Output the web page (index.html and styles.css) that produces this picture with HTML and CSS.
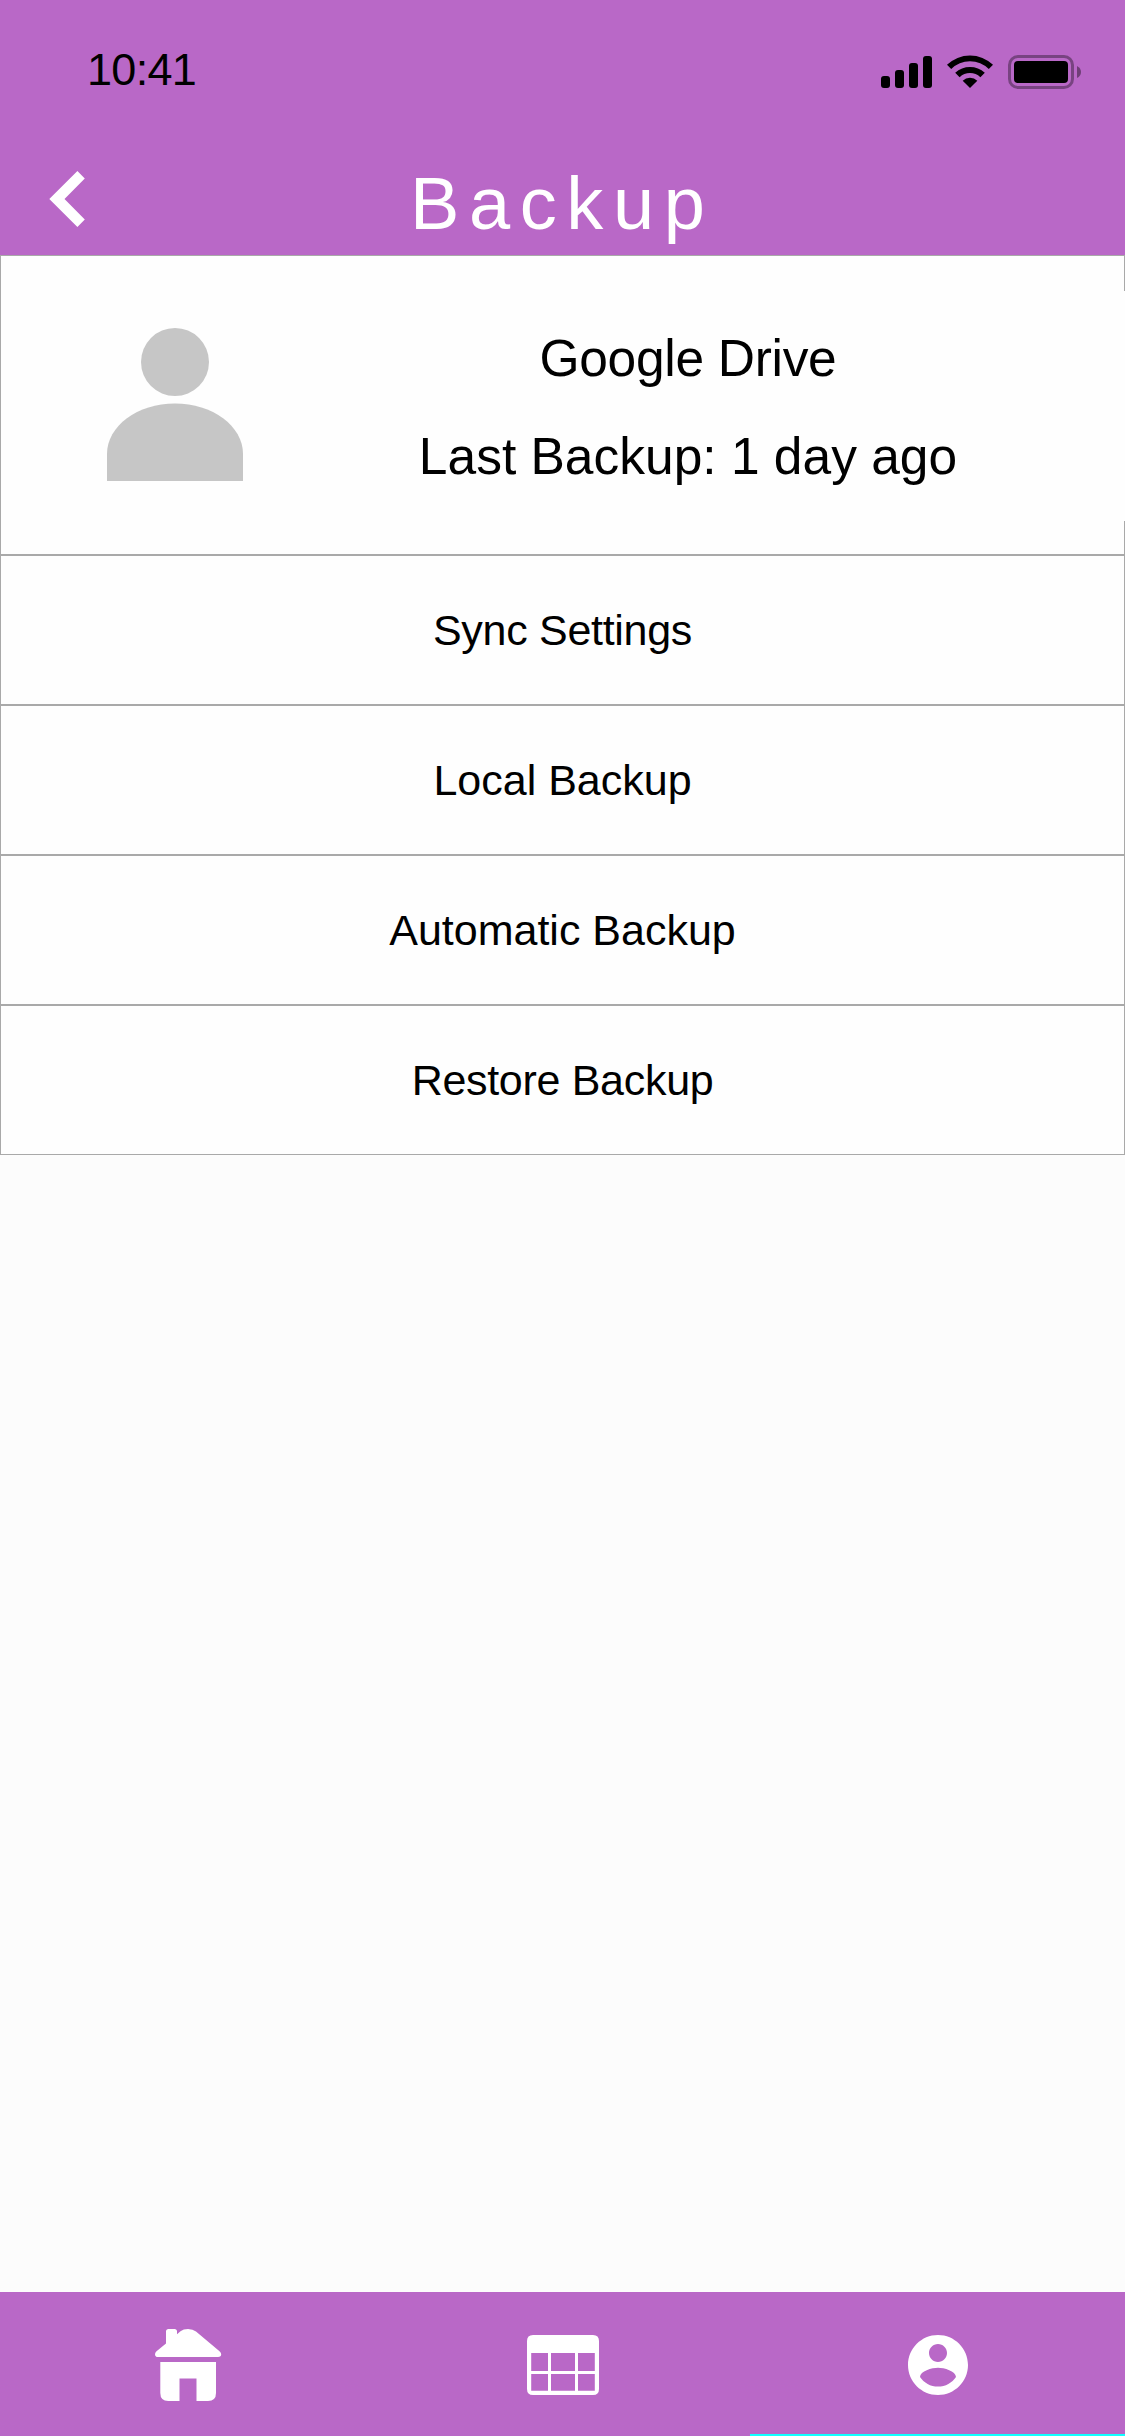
FILE: index.html
```html
<!DOCTYPE html>
<html lang="en">
<head>
<meta charset="utf-8">
<title>Backup</title>
<link rel="stylesheet" href="styles.css">
</head>
<body>
<div class="screen">
  <header class="header">
    <div class="status">
      <span class="time">10:41</span>
      <svg class="indicators" width="200" height="35" viewBox="881 55 200 35" aria-hidden="true">
        <rect x="881" y="76" width="9" height="12" rx="3"/>
        <rect x="895" y="70" width="9" height="18" rx="3"/>
        <rect x="909" y="63" width="9" height="25" rx="3"/>
        <rect x="923" y="56" width="9" height="32" rx="3"/>
        <g transform="translate(970 88)">
          <path d="M0 0L-7.3 -7.3A10.5 10.5 0 0 1 7.3 -7.3Z"/>
          <path d="M-14.8 -15.2A22 22 0 0 1 14.8 -15.2L10.4 -10.8A15.2 15.2 0 0 0 -10.4 -10.8Z"/>
          <path d="M-23 -23.2A33 33 0 0 1 23 -23.2L18.8 -19A26.5 26.5 0 0 0 -18.8 -19Z"/>
        </g>
        <rect x="1009.5" y="56.5" width="63" height="31" rx="8.5" fill="none" stroke="#000" stroke-opacity=".35" stroke-width="3"/>
        <rect x="1014" y="61" width="54" height="22" rx="4"/>
        <path d="M1077 66Q1081 68 1081 72T1077 78Z" fill-opacity=".4"/>
      </svg>
    </div>
    <div class="titlebar">
      <svg class="back" width="36" height="58" viewBox="49 170 36 58" aria-hidden="true"><path d="M49.3 199L77.4 171L84.8 178.5L64.5 199L84.8 219.5L77.4 227Z"/></svg>
      <h1 class="title">Backup</h1>
    </div>
  </header>

  <main class="list">
    <section class="row account">
      <svg class="avatar" width="136" height="153" viewBox="107.5 328 136 153" aria-hidden="true">
        <circle cx="175.5" cy="362" r="34"/>
        <path d="M107.5 481V454C107.5 426 138 403.5 175.5 403.5S243.5 426 243.5 454V481Z"/>
      </svg>
      <div class="info">
        <p class="line provider">Google Drive</p>
        <p class="line">Last Backup: 1 day ago</p>
      </div>
    </section>
    <div class="row item tight">Sync Settings</div>
    <div class="row item">Local Backup</div>
    <div class="row item">Automatic Backup</div>
    <div class="row item tight">Restore Backup</div>
  </main>

  <nav class="tabs">
    <div class="tab">
      <svg width="68" height="74" viewBox="154 2328 68 74" aria-hidden="true">
        <path d="M158 2357Q155 2357 155 2354.2Q155 2352.6 156.5 2351.2L166 2343.5V2331.5Q166 2329 168.5 2329H174.5Q177 2329 177 2331.5V2334.3L180.5 2331.3Q183.3 2329 188 2329Q193 2329 196 2331.5L219.5 2351.2Q221.2 2352.8 221.2 2354.3Q221.2 2357 218 2357Z"/>
        <path d="M160.3 2362H216V2393Q216 2401 208 2401H196.500V2378.500H179.500V2401H168.300Q160.300 2401 160.300 2393Z"/>
      </svg>
    </div>
    <div class="tab">
      <svg width="72" height="60" viewBox="527 2335 72 60" aria-hidden="true">
        <path fill-rule="evenodd" d="M533 2335H593Q599 2335 599 2341V2389Q599 2395 593 2395H533Q527 2395 527 2389V2341Q527 2335 533 2335ZM531.2 2353V2371H548V2353ZM551 2353V2371H575V2353ZM578 2353V2371H594.8V2353ZM531.2 2374V2390.7H548V2374ZM551 2374V2390.7H575V2374ZM578 2374V2390.7H594.8V2374Z"/>
      </svg>
    </div>
    <div class="tab active">
      <svg width="60" height="60" viewBox="2 2 20 20" aria-hidden="true">
        <path d="M12 2C6.48 2 2 6.48 2 12s4.48 10 10 10 10-4.48 10-10S17.52 2 12 2zm0 3c1.66 0 3 1.34 3 3s-1.34 3-3 3-3-1.34-3-3 1.34-3 3-3zm0 14.2c-2.5 0-4.71-1.28-6-3.22.03-1.99 4-3.08 6-3.08 1.99 0 5.97 1.09 6 3.08-1.29 1.94-3.5 3.22-6 3.22z"/>
      </svg>
    </div>
  </nav>
</div>
</body>
</html>
```
FILE: styles.css
```css
* { box-sizing: border-box; margin: 0; padding: 0; }

body {
  font-family: "Liberation Sans", Helvetica, Arial, sans-serif;
  color: #000;
  background: #fcfcfc;
}

svg { display: block; flex: none; }

.screen {
  width: 1125px;
  height: 2436px;
  display: flex;
  flex-direction: column;
  overflow: hidden;
}

.header {
  height: 255px;
  background: #b968c7;
}

.status {
  height: 140px;
  padding: 0 44px 0 87px;
  display: flex;
  justify-content: space-between;
}

.time {
  font-size: 45px;
  line-height: 51px;
  letter-spacing: -0.7px;
  padding-top: 44px;
}

.indicators { margin-top: 55px; }

.titlebar {
  height: 115px;
  display: flex;
}

.back {
  margin: 30px 0 0 49px;
  fill: #fff;
}

.title {
  margin-left: 325px;
  padding-top: 22px;
  font-size: 74px;
  font-weight: 400;
  line-height: 84px;
  letter-spacing: 9.6px;
  color: #fff;
}

.list { background: #fefefe; }

.row {
  height: 150px;
  border: 1px solid #a9a9a9;
}

.account {
  height: 300px;
  display: flex;
  align-items: flex-start;
}

.avatar {
  margin: 72px 0 0 106px;
  fill: #c6c6c6;
}

.info {
  flex: 1;
  height: 230px;
  margin: 35px -1px 0 8px;
  padding-top: 18px;
  background: #fefefe;
  text-align: center;
}

.line {
  font-size: 51.5px;
  line-height: 98px;
}

.provider { letter-spacing: -0.3px; }

.item {
  font-size: 43px;
  line-height: 148px;
  text-align: center;
}

.tight { letter-spacing: -0.3px; }

.tabs {
  height: 144px;
  margin-top: auto;
  display: grid;
  grid-template-columns: repeat(3, 1fr);
  background: #b968c7;
}

.tab {
  height: 144px;
  display: flex;
  align-items: center;
  justify-content: center;
  padding-top: 2px;
  fill: #fff;
}

.active {
  padding-top: 4px;
  border-bottom: 2px solid #1ff;
}
```
